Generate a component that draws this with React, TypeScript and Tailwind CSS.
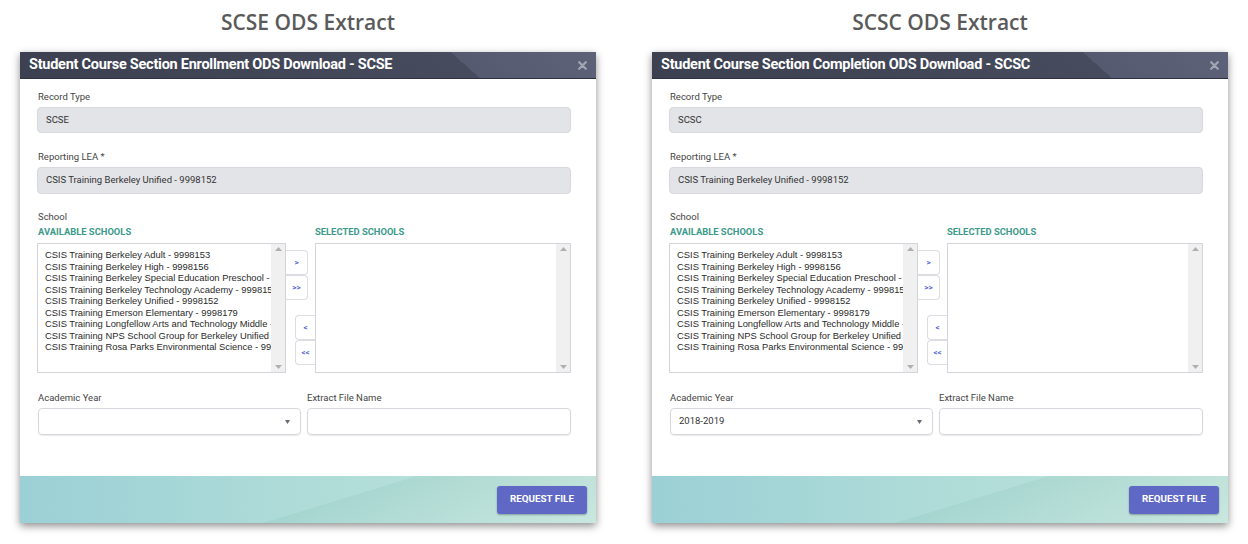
import React from 'react';

// visible part of each row, the list clips the rest
const schools = [
  'CSIS Training Berkeley Adult - 9998153',
  'CSIS Training Berkeley High - 9998156',
  'CSIS Training Berkeley Special Education Preschool -',
  'CSIS Training Berkeley Technology Academy - 999815',
  'CSIS Training Berkeley Unified - 9998152',
  'CSIS Training Emerson Elementary - 9998179',
  'CSIS Training Longfellow Arts and Technology Middle -',
  'CSIS Training NPS School Group for Berkeley Unified',
  'CSIS Training Rosa Parks Environmental Science - 99',
];

const Label = ({ children }: { children: React.ReactNode }) => (
  <div className="text-[9.5px] leading-[12px] text-[#444]">{children}</div>
);

const Scrollbar = () => (
  <div className="w-[14px] bg-[#f0f0f0] flex flex-col justify-between items-center py-[3px]">
    <svg width="7" height="4" viewBox="0 0 7 4"><path d="M0 4 L3.5 0 L7 4 Z" fill="#b0b0b0" /></svg>
    <svg width="7" height="4" viewBox="0 0 7 4"><path d="M0 0 L3.5 4 L7 0 Z" fill="#b0b0b0" /></svg>
  </div>
);

const MoveBtn = ({ label, side }: { label: string; side: 'l' | 'r' }) => (
  <div
    className={`h-[25px] flex items-center justify-center bg-white border border-[#dcdde2] text-[8px] font-bold text-[#5566d6] ${
      side === 'r' ? 'w-[22px] rounded-r-[4px] border-l-0' : 'w-[20px] rounded-l-[4px] border-r-0'
    }`}
  >
    {label}
  </div>
);

const Modal = ({ title, record, year }: { title: string; record: string; year: string }) => (
  <div className="w-[576px] bg-white shadow-[0_3px_8px_rgba(0,0,0,0.45)]">
    <div className="h-[27px] flex items-center justify-between pl-[9px] pr-[9px] bg-[linear-gradient(42deg,#3c4050_0%,#464b5d_76%,#565a70_76%,#5e6279_100%)] border-b border-[#2e3140]">
      <span className="text-white font-bold text-[14.5px] tracking-[-0.25px]">{title}</span>
      <svg width="9" height="9" viewBox="0 0 9 9">
        <path d="M1.2 1.2 L7.8 7.8 M7.8 1.2 L1.2 7.8" stroke="#a3a6b2" strokeWidth="2.2" strokeLinecap="round" />
      </svg>
    </div>
    <div className="pl-[17px] pr-[25px] pt-[12px] pb-[41px]">
      <div className="pl-[1px]"><Label>Record Type</Label></div>
      <div className="mt-[4px] h-[26px] rounded-[4px] bg-[#e3e4e8] border border-[#d8d9de] flex items-center pl-[8px] text-[9.5px] text-[#333]">
        {record}
      </div>
      <div className="mt-[18px] pl-[1px]"><Label>Reporting LEA *</Label></div>
      <div className="mt-[4px] h-[27px] rounded-[4px] bg-[#e3e4e8] border border-[#d8d9de] flex items-center pl-[8px] text-[9.5px] text-[#333]">
        CSIS Training Berkeley Unified - 9998152
      </div>
      <div className="mt-[17px] pl-[1px]"><Label>School</Label></div>
      <div className="mt-[3px] flex">
        <div className="w-[278px] pl-[1px] text-[9.4px] leading-[12px] font-bold text-[#3b9a8a]">AVAILABLE SCHOOLS</div>
        <div className="flex-1 text-[9.4px] leading-[12px] font-bold text-[#3b9a8a]">SELECTED SCHOOLS</div>
      </div>
      <div className="mt-[5px] flex h-[130px]">
        <div className="w-[249px] border border-[#d4d5da] flex bg-white">
          <div className="flex-1 overflow-hidden pl-[7px] pt-[5px] font-['Liberation_Sans',Arial,sans-serif] text-[9.4px] leading-[11.5px] text-[#2a2a2a] whitespace-nowrap">
            {schools.map((s) => (
              <div key={s}>{s}</div>
            ))}
          </div>
          <Scrollbar />
        </div>
        <div className="w-[29px] flex flex-col pt-[7px]">
          <MoveBtn label=">" side="r" />
          <MoveBtn label=">>" side="r" />
          <div className="mt-[15px] self-end flex flex-col">
            <MoveBtn label="<" side="l" />
            <MoveBtn label="<<" side="l" />
          </div>
        </div>
        <div className="flex-1 border border-[#d4d5da] flex bg-white">
          <div className="flex-1" />
          <Scrollbar />
        </div>
      </div>
      <div className="mt-[19px] flex gap-[6px] pl-[1px]">
        <div className="w-[263px]">
          <Label>Academic Year</Label>
          <div className="mt-[4px] h-[27px] rounded-[4px] border border-[#d6d7dc] shadow-[0_1px_1px_rgba(0,0,0,0.08)] flex items-center justify-between pl-[8px] pr-[10px] text-[9.5px] text-[#333]">
            <span>{year}</span>
            <svg width="5" height="4" viewBox="0 0 5 4"><path d="M0 0 L2.5 4 L5 0 Z" fill="#666a77" /></svg>
          </div>
        </div>
        <div className="flex-1">
          <Label>Extract File Name</Label>
          <div className="mt-[4px] h-[27px] rounded-[4px] border border-[#d6d7dc] shadow-[0_1px_1px_rgba(0,0,0,0.08)]" />
        </div>
      </div>
    </div>
    <div className="h-[47px] flex items-center justify-end pr-[9px] bg-[linear-gradient(163deg,transparent_54.4%,rgba(90,160,140,0.1)_54.4%,rgba(255,255,255,0.15)_100%),linear-gradient(to_right,#9bd0d6,#afdcd8_50%,#bfe3da)]">
      <div className="w-[90px] h-[28px] rounded-[3px] bg-[#5f69c5] shadow-[0_1px_2px_rgba(0,0,0,0.3)] flex items-center justify-center text-white font-bold text-[9.8px]">
        REQUEST FILE
      </div>
    </div>
  </div>
);

export default function App() {
  return (
    <div className="w-[1248px] h-[544px] bg-white font-['Roboto',sans-serif] flex gap-[56px] pl-[20px]">
      <div className="flex flex-col">
        <div className="h-[52px] pt-[8px] text-center font-['Open_Sans',sans-serif] font-semibold text-[21px] leading-[28px] text-[#5a5a5a]">
          SCSE ODS Extract
        </div>
        <Modal title="Student Course Section Enrollment ODS Download - SCSE" record="SCSE" year="" />
      </div>
      <div className="flex flex-col">
        <div className="h-[52px] pt-[8px] text-center font-['Open_Sans',sans-serif] font-semibold text-[21px] leading-[28px] text-[#5a5a5a]">
          SCSC ODS Extract
        </div>
        <Modal title="Student Course Section Completion ODS Download - SCSC" record="SCSC" year="2018-2019" />
      </div>
    </div>
  );
}
